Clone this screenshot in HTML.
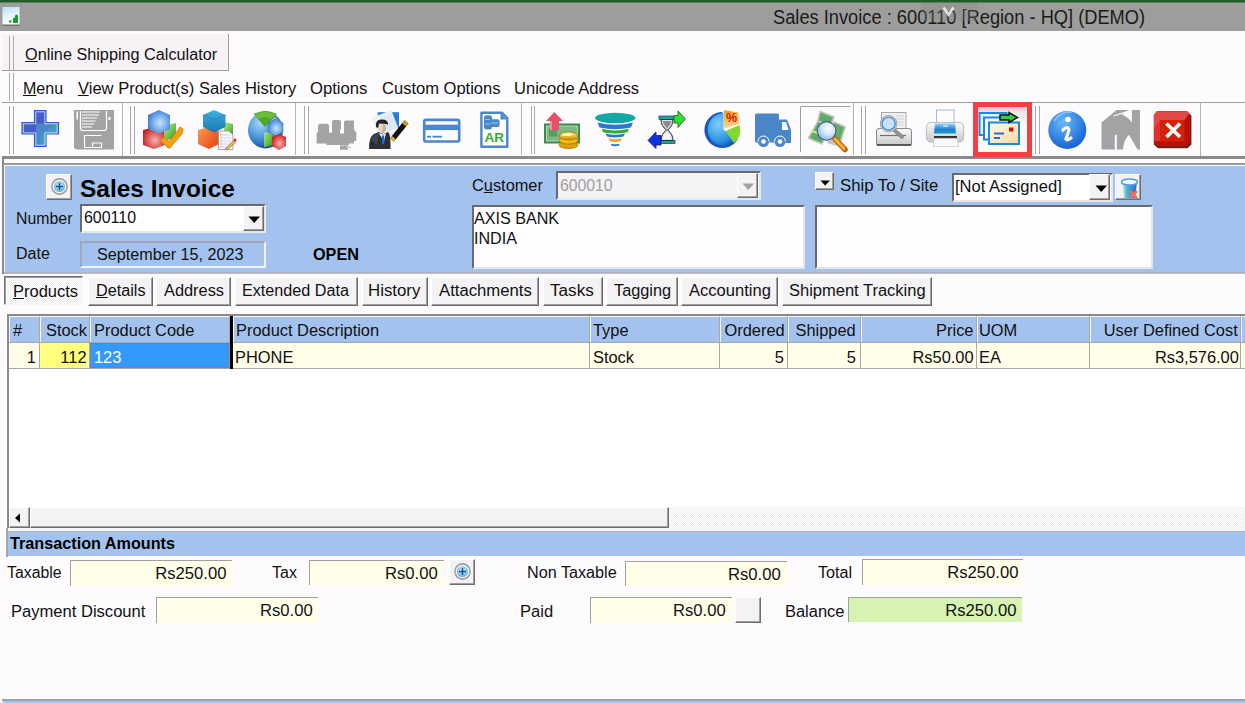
<!DOCTYPE html>
<html><head><meta charset="utf-8">
<style>
*{box-sizing:border-box;margin:0;padding:0}
html,body{width:1245px;height:703px;overflow:hidden;background:#fefbfe;font-family:"Liberation Sans",sans-serif;font-size:16px;color:#111}
.a{position:absolute}
.t{position:absolute;white-space:pre;line-height:1;font-size:16px}
u{text-decoration:underline;text-underline-offset:1px;text-decoration-thickness:1.3px}
.grip{position:absolute;width:5px;border-left:1px solid #a8a8a8;border-right:1px solid #a8a8a8}
.vsep{position:absolute;width:2px;border-left:1px solid #b0b0b0;border-right:1px solid #fff}
.btn{position:absolute;background:#f5f2f5;border:1px solid;border-color:#fff #6e6e6e #6e6e6e #fff;box-shadow:inset -1px -1px 0 #a0a0a0}
.fld{position:absolute;background:#fffee8;border-top:1px solid #a0a0a0;border-left:1px solid #a0a0a0}
.num{position:absolute;right:6px;white-space:pre;line-height:1;transform:scaleX(1.04);transform-origin:100% 0}
.tab{position:absolute;top:277px;height:29px;background:#f5f2f5;border:1px solid;border-color:#fff #6a6a6a #6a6a6a #fff;box-shadow:inset -1px -1px 0 #a0a0a0}
.tab span{position:absolute;top:5px;margin-left:-1px;white-space:pre;line-height:1}
.hd{position:absolute;top:316px;height:27px;background:#a3c3ee;border-top:1px solid #f4f8fc;border-bottom:1px solid #a0a8b4;border-right:1px solid #a8a8a8;box-shadow:inset 1px 0 0 #f4f8fc}
.hd span{position:absolute;top:6px;white-space:pre;line-height:1}
.cl span{position:absolute;top:6.5px;white-space:pre;line-height:1}
.cl{position:absolute;top:343px;height:26px;background:#fffee8;border-right:1px solid #a8a8a8;border-bottom:1px solid #a8a8a8}
</style></head><body>

<!-- title bar -->
<div class="a" style="left:0;top:0;width:1245px;height:3px;background:linear-gradient(#235c2a 0,#235c2a 2px,#5e7c60 2px)"></div>
<div class="a" style="left:0;top:3px;width:1245px;height:28px;background:#9d9e9b"></div>
<svg class="a" style="left:0;top:3px" width="24" height="26"><defs><linearGradient id="ti" x1="0" y1="0" x2="0.3" y2="1"><stop offset="0" stop-color="#b8e0f8"/><stop offset="0.6" stop-color="#e8f6fd"/><stop offset="1" stop-color="#ffffff"/></linearGradient></defs>
<rect x="2.5" y="21" width="17" height="2" fill="#505050" opacity="0.6"/>
<rect x="2.5" y="4" width="17" height="17.5" fill="url(#ti)"/>
<circle cx="10.2" cy="18.5" r="1.3" fill="#1a9a2a"/>
<path d="M13,20V16Q13,14.8 14,14.8H15.5V20Z" fill="#1a9a2a"/>
<path d="M15,20V13Q15,11.5 16.5,11.5Q18,11.5 18,13V20Z" fill="#1a9a2a"/>
</svg>
<div class="t" style="left:773px;top:7px;font-size:20px;color:#1a1a1a;transform:scaleX(0.913);transform-origin:0 0">Sales Invoice : 600110 [Region - HQ] (DEMO)</div>
<div class="a" style="left:921px;top:3px;width:56px;height:18px;background:rgba(135,135,135,0.3)"></div>
<svg class="a" style="left:941px;top:6px" width="16" height="12"><path d="M2.5,1.5L7.5,8.5L12.5,1.5" fill="none" stroke="#f4f4f4" stroke-width="2.6" opacity="0.85"/></svg>

<!-- shipping toolbar -->
<div class="a" style="left:2px;top:34px;width:227px;height:37px;background:#f6f2f6;border-right:1px solid #a0a0a0;border-bottom:1px solid #a0a0a0"></div>
<div class="grip" style="left:9px;top:36px;height:34px"></div>
<div class="t" style="left:25px;top:47px;transform:scaleX(1.014);transform-origin:0 0"><u>O</u>nline Shipping Calculator</div>

<!-- menu bar -->
<div class="a" style="left:2px;top:102px;width:1243px;height:1px;background:#a0a0a0"></div>
<div class="grip" style="left:9px;top:73px;height:28px"></div>
<div class="t" style="left:23px;top:81px"><u>M</u>enu</div>
<div class="t" style="left:77.5px;top:81px;transform:scaleX(1.033);transform-origin:0 0"><u>V</u>iew Product(s) Sales History</div>
<div class="t" style="left:310px;top:81px;transform:scaleX(1.04);transform-origin:0 0">Options</div>
<div class="t" style="left:381.5px;top:81px;transform:scaleX(1.033);transform-origin:0 0">Custom Options</div>
<div class="t" style="left:513.5px;top:81px;transform:scaleX(1.033);transform-origin:0 0">Unicode Address</div>

<!-- icon toolbar -->
<div id="tb">
<svg class="a" style="left:0;top:100px;z-index:2" width="1245" height="58" viewBox="0 100 1245 58">
<defs>
<radialGradient id="gBlue" cx="0.55" cy="0.55" r="0.6"><stop offset="0" stop-color="#c8e4fa"/><stop offset="0.6" stop-color="#70a8e8"/><stop offset="1" stop-color="#3a78d0"/></radialGradient>
<radialGradient id="gRed" cx="0.55" cy="0.6" r="0.6"><stop offset="0" stop-color="#f4b0b0"/><stop offset="0.6" stop-color="#e05858"/><stop offset="1" stop-color="#c82020"/></radialGradient>
<linearGradient id="gGreen" x1="0" y1="0" x2="1" y2="1"><stop offset="0" stop-color="#b0f080"/><stop offset="1" stop-color="#3a9a20"/></linearGradient>
<linearGradient id="gTeal" x1="0" y1="0" x2="0" y2="1"><stop offset="0" stop-color="#40b0e0"/><stop offset="1" stop-color="#1878b0"/></linearGradient>
<linearGradient id="gOrange" x1="0" y1="0" x2="1" y2="1"><stop offset="0" stop-color="#ff9a50"/><stop offset="1" stop-color="#e04010"/></linearGradient>
<radialGradient id="gSphere" cx="0.35" cy="0.3" r="0.8"><stop offset="0" stop-color="#a8d8f8"/><stop offset="0.6" stop-color="#3a8ad0"/><stop offset="1" stop-color="#0a3a90"/></radialGradient>
<radialGradient id="gInfo" cx="0.4" cy="0.3" r="0.8"><stop offset="0" stop-color="#6ab8f8"/><stop offset="1" stop-color="#0a58d0"/></radialGradient>
<radialGradient id="gPie" cx="0.35" cy="0.35" r="0.75"><stop offset="0" stop-color="#80d0f8"/><stop offset="0.7" stop-color="#2a90e0"/><stop offset="1" stop-color="#1050b0"/></radialGradient>
<linearGradient id="gX" x1="0" y1="0" x2="1" y2="1"><stop offset="0" stop-color="#e83828"/><stop offset="0.7" stop-color="#c01808"/><stop offset="1" stop-color="#601008"/></linearGradient>
<linearGradient id="gGold" x1="0" y1="0" x2="0" y2="1"><stop offset="0" stop-color="#fff080"/><stop offset="1" stop-color="#d08a00"/></linearGradient>
<linearGradient id="gMail" x1="0" y1="0" x2="1" y2="1"><stop offset="0" stop-color="#fffbe8"/><stop offset="1" stop-color="#f8d8a0"/></linearGradient>
<linearGradient id="gBox" x1="0" y1="0" x2="0" y2="1"><stop offset="0" stop-color="#b8b8b8"/><stop offset="0.15" stop-color="#e8e8e8"/><stop offset="0.4" stop-color="#fafafa"/></linearGradient>
</defs>
<!-- toolbar frame lines -->
<rect x="2" y="102" width="1243" height="1" fill="#a0a0a0"/>
<rect x="122" y="103" width="1" height="53" fill="#b4b4b4"/>
<rect x="295" y="103" width="1" height="52" fill="#b4b4b4"/>
<rect x="521" y="103" width="1" height="52" fill="#b4b4b4"/>
<rect x="853" y="103" width="1" height="52" fill="#b4b4b4"/>
<rect x="1200" y="103" width="1" height="53" fill="#b4b4b4"/>
<!-- grips -->
<g fill="#a8a8a8">
<rect x="9" y="106" width="1" height="48"/><rect x="13" y="106" width="1" height="48"/>
<rect x="130" y="106" width="1" height="48"/><rect x="134" y="106" width="1" height="48"/>
<rect x="304" y="106" width="1" height="48"/><rect x="308" y="106" width="1" height="48"/>
<rect x="531" y="106" width="1" height="48"/><rect x="534" y="106" width="1" height="48"/>
<rect x="861" y="106" width="1" height="48"/><rect x="865" y="106" width="1" height="48"/>
<rect x="1035" y="106" width="1" height="48"/><rect x="1039" y="106" width="1" height="48"/>
</g>
<!-- 1 plus -->
<path d="M34.5,110.5H46V122.5H58.5V134H46V146.5H34.5V134H22V122.5H34.5Z" fill="#4a88cc" stroke="#2a5ed8" stroke-width="1.2"/>
<path d="M35.5,111.5H45V123.5H36V133H23V123.5H35.5Z" fill="#4a5cc8"/>
<path d="M46,134H57.5V123.5H46V145.5H36V134Z" fill="#4a8ac8"/>
<path d="M44,132L57,125V133H46V145L40,145L42,135Z" fill="#48a0c8" opacity="0.7"/>
<path d="M35.8,111.8H44.8V123.8H57.2V132.8H44.8V145.2H35.8V132.8H23.3V123.8H35.8Z" fill="none" stroke="#d8ecfc" stroke-width="0.9" opacity="0.85"/>
<!-- 2 disk -->
<path d="M74,110H114V149.5H76L74,147.5Z" fill="#a3a2a5"/>
<path d="M80.5,111V128Q80.5,130.5 83,130.5H104Q106.5,130.5 106.5,128V111" fill="none" stroke="#fff" stroke-width="1.2"/>
<g fill="#fff"><rect x="82" y="111.5" width="18" height="1"/><rect x="82" y="114.5" width="17" height="1"/><rect x="82" y="117.5" width="15" height="1"/><rect x="82" y="120.5" width="13.5" height="1"/><rect x="82" y="123.5" width="12" height="1"/><rect x="82" y="126.5" width="10" height="1"/></g>
<path d="M84.5,147.5V135.5H101.5M84.5,147.5H101.5V143H92.5V147" fill="none" stroke="#fff" stroke-width="1.2"/>
<rect x="76.5" y="111.5" width="1.5" height="8" fill="#fff"/><rect x="108.5" y="117" width="2" height="3" fill="#fff"/>
<!-- 3 cubes check -->
<path d="M143,130L154,127L165,131V145L154,149L143,145Z" fill="url(#gRed)"/>
<path d="M164,126L176,123V138L164,141Z" fill="url(#gGreen)"/>
<path d="M148,115L159,110L170,115V129L159,133.5L148,129Z" fill="url(#gBlue)"/>
<path d="M160,140L165,137L169,142L180,127L183,129L182,134L170,148L168,148Z" fill="#f5a010" stroke="#d08000" stroke-width="0.8"/>
<!-- 4 cubes doc -->
<path d="M198,130L209,127L219,131V144L209,149L198,144Z" fill="url(#gOrange)"/>
<path d="M224,122L233,124V137L224,138Z" fill="url(#gGreen)"/>
<path d="M203,115L214,110L225.5,115V127L214,132.5L203,127Z" fill="url(#gTeal)"/>
<path d="M203,115L214,120L225.5,115" fill="none" stroke="#2a88c0" stroke-width="1"/>
<path d="M218.5,131H229L233,135V149.5H218.5Z" fill="#f8f8ff" stroke="#8a9a8a" stroke-width="0.8"/>
<g stroke="#b0c0e8" stroke-width="0.6"><path d="M220,135H231M220,138H231M220,141H231M220,144H231M220,147H231"/></g>
<path d="M221,131V149" stroke="#f0a0a0" stroke-width="0.6"/>
<path d="M225,149L234,140L236,142L227,150Z" fill="#e8c040" stroke="#555" stroke-width="0.5"/>
<circle cx="235" cy="140" r="1.5" fill="#e03030"/>
<!-- 5 globe cubes -->
<ellipse cx="265.5" cy="130" rx="17.5" ry="18.5" fill="url(#gSphere)"/>
<path d="M270,114Q280,118 282,128L272,126Z" fill="#8cc4ec" opacity="0.8"/>
<path d="M253.5,114Q265,108 277,114L265,127Z" fill="#50a820"/>
<path d="M254,114Q265,110 276,114L270,119Q265,115 259,119Z" fill="#80c850" opacity="0.6"/>
<path d="M264,133L273,130V145L264,147Z" fill="url(#gGreen)"/>
<path d="M268,123L275.5,119L283,123V132L275.5,136L268,132Z" fill="url(#gBlue)" stroke="#4a78c0" stroke-width="0.6"/>
<path d="M272,137L279,134L286,137V146L279,150L272,146Z" fill="url(#gRed)"/>
<!-- 6 gray people -->
<path d="M318,126Q318,124 320,123.7H327Q329,124 329,126V132.5H332V122Q332,120 334,120H339Q341,120 341,122V129.5H340V133.5H344V122Q344,120.5 346,120.5H354V130H355V131.5H356.3V141H354V143.5H349V145H326.5V143.5H316.6V132.5H318Z" fill="#a3a2a5"/>
<path d="M340,145.5H348V149.7H340Z" fill="#a3a2a5"/><rect x="346" y="147" width="5" height="1" fill="#c8c8ca"/>
<!-- 7 man pen -->
<path d="M377.7,112.2H399V135H377.7Z" fill="#2a7ad8"/>
<path d="M372,118L391,110.5L399.5,132L381,139Z" fill="#eef3fa" stroke="#f0ecd8" stroke-width="0.6"/>
<path d="M380,117L392,113L397,128L386,132Z" fill="#dce8f4"/>
<path d="M369.2,149Q368.5,137 374,134L379,132L383,134L388,132Q391,134 390.5,149Z" fill="#2a2e34"/>
<path d="M371,140Q373,135 379,133L377,145Z" fill="#4a5058" opacity="0.7"/>
<path d="M378.5,133L383,134.5L386,133L384,141Z" fill="#f4f4f4"/>
<path d="M382,135.5H384L384.5,143L383,144.5L381.5,143Z" fill="#1a6ad0"/>
<path d="M377.5,122Q377,133 382,133.5Q386.5,133 386.5,122Z" fill="#e8d4c0"/>
<path d="M383,124Q386.5,125 386,130Q384,133 382,133.5Z" fill="#c8b09a"/>
<path d="M376,127Q375,119 382,119.5Q388.5,119.5 388,125L386.5,124L379,123.5L378,128Z" fill="#1e2226"/>
<path d="M390,138.5L404.5,120L408.5,123.5L394,141.5Z" fill="#111"/>
<path d="M390,138.5L392,136L396,139.5L394,141.5Z" fill="#e0b030"/>
<path d="M402,123L404.5,120L408.5,123.5L406,126.5Z" fill="#e8c040" opacity="0.8"/>
<!-- 8 card -->
<rect x="424.2" y="119.9" width="35" height="21.6" rx="1.8" fill="none" stroke="#4a88cc" stroke-width="2.6"/>
<rect x="424" y="124.7" width="35" height="5.4" fill="#4a88cc"/>
<rect x="427" y="135.8" width="4" height="1.8" fill="#4a88cc"/><rect x="432.5" y="135.8" width="9.5" height="1.8" fill="#4a88cc"/>
<!-- 9 AR doc -->
<path d="M481.4,112.8H502L507.3,118V146.8H481.4Z" fill="#fff" stroke="#4a88cc" stroke-width="2.4" stroke-linejoin="round"/>
<path d="M500.5,113V119.5H507" fill="#4a88cc"/>
<g fill="#4a88cc"><rect x="484" y="115.2" width="8" height="14.3" rx="2.5"/><rect x="490.3" y="119.3" width="9.3" height="7.8" rx="2"/></g>
<g stroke="#d8e8f8" stroke-width="0.6"><path d="M485,119.5H490M485,124H490M491,123H498"/></g>
<text x="484.6" y="141.6" font-family="Liberation Sans" font-weight="bold" font-size="13" fill="#30b030" textLength="19.5" lengthAdjust="spacingAndGlyphs">AR</text>
<!-- 10 money arrow -->
<rect x="544" y="123.5" width="36" height="20" fill="#3a8a4a"/>
<rect x="546.5" y="126" width="31" height="15" fill="#7ab884" stroke="#c8e4c8" stroke-width="0.8"/>
<rect x="549" y="128.5" width="8" height="8" fill="#5a9a64"/>
<path d="M554.3,112L563,121H559V130H550V121H546Z" fill="#e8506a"/>
<path d="M550,121H552V130H550Z" fill="#f890a0"/>
<ellipse cx="568.5" cy="145" rx="9.5" ry="3.5" fill="#e0a000" stroke="#b07000" stroke-width="0.8"/>
<ellipse cx="568.5" cy="140.5" rx="9.5" ry="3.5" fill="#f0c010" stroke="#b07000" stroke-width="0.8"/>
<ellipse cx="568.5" cy="136" rx="9.5" ry="4" fill="url(#gGold)" stroke="#b07000" stroke-width="0.8"/>
<ellipse cx="567" cy="134.5" rx="5" ry="1.5" fill="#fff8c0"/>
<!-- 11 funnel -->
<ellipse cx="615.3" cy="118" rx="20.2" ry="5.2" fill="#10a8a0"/>
<path d="M597.5,122.5Q615,127 633,122.5L631,127.5Q615,131 599.5,127.5Z" fill="#2a78d0"/>
<path d="M601.5,128.8Q615,132 629,128.8L627.5,132.2Q615,135 603,132.2Z" fill="#30b030"/>
<path d="M605.5,133.6Q615,136 625,133.6L623.5,136.6Q615,138.5 607,136.6Z" fill="#2a78d0"/>
<path d="M608.5,138.3Q615,140 622,138.3L620.5,141.3Q615,142.8 610,141.3Z" fill="#f8a020"/>
<path d="M611,143.8Q615,144.8 619.5,143.8L619,145.8Q615,146.5 611.5,145.8Z" fill="#2a78d0"/>
<!-- 12 hourglass -->
<path d="M661,119.5H673Q673,126 667.5,130Q673,134 673,140.5H661Q661,134 666.5,130Q661,126 661,119.5Z" fill="#e0e0e0" stroke="#222" stroke-width="1"/>
<path d="M662.5,121H671.5Q670,126 667,128.5Q664,126 662.5,121Z" fill="#555" opacity="0.6"/>
<path d="M667,131.5Q670,134 671.5,139H662.5Q664,134 667,131.5Z" fill="#f4f4f4"/>
<rect x="659" y="116" width="16" height="3.5" fill="#10a8a8" stroke="#222" stroke-width="0.6"/>
<rect x="659" y="140.5" width="16" height="3" fill="#10a8a8" stroke="#222" stroke-width="0.6"/>
<path d="M674,115.5H678V111L685.5,119L678,127.5V123H674Z" fill="#30e030" stroke="#1a5a1a" stroke-width="0.8"/>
<path d="M661,135.5H656V132L648,140.5L656,148.5V145H661Z" fill="#0a30e0" stroke="#0a1a6a" stroke-width="0.8"/>
<!-- 13 pie -->
<defs><linearGradient id="gOr2" x1="0" y1="0" x2="0" y2="1"><stop offset="0" stop-color="#f0a020"/><stop offset="1" stop-color="#f8d890"/></linearGradient></defs>
<path d="M722.5,130L722.5,112A18,18 0 1 0 738,139Z" fill="#1a58c0"/>
<path d="M723.5,130L723.5,113A16.5,16.5 0 1 0 738,138.5Z" fill="url(#gPie)"/>
<path d="M724,128.5L724,110L738,112.5L739,124Z" fill="url(#gOr2)"/>
<path d="M725.5,131L739.5,125A16,16 0 0 1 734,143Z" fill="#80d830"/>
<text x="726" y="121.5" font-family="Liberation Sans" font-weight="bold" font-size="12.5" fill="#e01818">%</text>
<!-- 14 truck -->
<g fill="#4a86c8">
<rect x="755" y="113.5" width="24" height="29" rx="1.5"/>
<path d="M779,119.5H787L791,130V143H779Z"/>
<circle cx="763.5" cy="141.5" r="5.5"/><circle cx="780" cy="141.5" r="5.5"/>
</g>
<path d="M782,122H786L788.5,130H782Z" fill="#fff"/>
<circle cx="763.5" cy="141.5" r="2.3" fill="#fff"/><circle cx="780" cy="141.5" r="2.3" fill="#fff"/>
<path d="M758,141.5A5.5,5.5 0 0 1 769,141.5" fill="none" stroke="#fff" stroke-width="1"/>
<path d="M774.5,141.5A5.5,5.5 0 0 1 785.5,141.5" fill="none" stroke="#fff" stroke-width="1"/>
<!-- 15 sunken box + map -->
<path d="M800.5,152.5V106.5H850.5" fill="none" stroke="#a0a0a0" stroke-width="1"/>
<path d="M850.5,106.5V152.5H800.5" fill="none" stroke="#fff" stroke-width="1"/>
<path d="M820,111.5L834,117L830,126L818,121Z" fill="#5aae6a" stroke="#c4c4bc" stroke-width="1.6"/>
<path d="M818,121L830,126L822,144L808.5,138Z" fill="#5aae6a" stroke="#c4c4bc" stroke-width="1.6"/>
<path d="M834,122L845,127L840,143L829,137Z" fill="#5aae6a" stroke="#c4c4bc" stroke-width="1.6"/>
<path d="M829,137L840,143L836,146L827,143Z" fill="#c8c8c0"/>
<path d="M811,131L818,133" stroke="#e0e090" stroke-width="2"/>
<defs><radialGradient id="gLens" cx="0.6" cy="0.35" r="0.7"><stop offset="0" stop-color="#ffffff"/><stop offset="0.5" stop-color="#cfe6f8"/><stop offset="1" stop-color="#8ab8e0"/></radialGradient>
<linearGradient id="gHandle" x1="0" y1="0" x2="1" y2="0"><stop offset="0" stop-color="#f8d070"/><stop offset="1" stop-color="#d07000"/></linearGradient></defs>
<path d="M835,139L845,149.5" stroke="#c06a00" stroke-width="5.5" stroke-linecap="round"/>
<path d="M835,139L844,148.5" stroke="#f8b040" stroke-width="3" stroke-linecap="round"/>
<circle cx="826.6" cy="130.9" r="9.3" fill="url(#gLens)" stroke="#4a5a8a" stroke-width="1.1"/>
<!-- 16 preview -->
<defs><linearGradient id="gPB" x1="0" y1="0" x2="0" y2="1"><stop offset="0" stop-color="#fafafa"/><stop offset="1" stop-color="#c8c8c8"/></linearGradient>
<linearGradient id="gPBlue" x1="0" y1="0" x2="0" y2="1"><stop offset="0" stop-color="#a0d0f8"/><stop offset="0.6" stop-color="#1a80d0"/><stop offset="1" stop-color="#10a0c0"/></linearGradient></defs>
<rect x="881.5" y="112.5" width="24.5" height="18" fill="#f0f0f0" stroke="#a8a8a8" stroke-width="1"/>
<g stroke="#c8c8c8" stroke-width="0.8"><path d="M896,116H904M896,119H904M897,122H904M898,125H904"/></g>
<path d="M876.5,131Q876.5,128.5 879,128.5H909Q911.5,128.5 911.5,131V144Q911.5,145.5 910,145.5H878Q876.5,145.5 876.5,144Z" fill="url(#gPB)" stroke="#8a8a8a" stroke-width="1"/>
<rect x="877" y="144" width="34" height="1.8" fill="#555"/>
<path d="M880,135.5H906" stroke="#707070" stroke-width="1.2"/>
<path d="M893,129L902,137" stroke="#909090" stroke-width="4" stroke-linecap="round"/>
<circle cx="888.6" cy="123.7" r="8.3" fill="#e8e8e8" stroke="#a0a0a0" stroke-width="1"/>
<circle cx="888.6" cy="123.7" r="6.6" fill="#c8e0f8" stroke="#4a88d0" stroke-width="1.4"/>
<!-- 17 printer -->
<rect x="936.5" y="110" width="17.5" height="15" fill="#fcfcfc" stroke="#90a8d8" stroke-width="0.8"/>
<path d="M931,122.5H959Q963.7,122.5 963.7,128V137Q963.7,142 959,142H931Q926.4,142 926.4,137V128Q926.4,122.5 931,122.5Z" fill="url(#gPB)" stroke="#a8b0b8" stroke-width="0.8"/>
<path d="M935,123.5H955L956,133.5H934Z" fill="url(#gPBlue)"/>
<rect x="943" y="125.5" width="5" height="1" fill="#fff"/>
<rect x="934" y="136" width="23" height="2.4" fill="#303030"/>
<path d="M934,138.4H957.5L958.5,146.5H933.5Z" fill="#fafafa" stroke="#c0c8c0" stroke-width="0.7"/>
<!-- 18 red box selected -->
<rect x="975.5" y="104.5" width="54" height="50" fill="url(#gBox)" stroke="#f04040" stroke-width="5"/>
<rect x="979.5" y="113" width="27" height="22" fill="#eaf4ff" stroke="#1a8ae0" stroke-width="2"/>
<rect x="984" y="117.5" width="28" height="22" fill="#f4f8ff" stroke="#1a8ae0" stroke-width="2"/>
<rect x="989" y="122.5" width="30" height="21.5" fill="url(#gMail)" stroke="#1a8ae0" stroke-width="2"/>
<rect x="1009" y="127.5" width="4.5" height="4" fill="#d01010"/>
<rect x="994" y="132.5" width="10" height="2" fill="#2a70d0"/><rect x="994" y="137" width="6" height="2" fill="#2a70d0"/>
<path d="M1000,115H1009V112.5L1017.5,117.5L1009,122.5V120H1000Z" fill="#30d040" stroke="#111" stroke-width="1.5"/>
<!-- 19 info -->
<circle cx="1067.3" cy="130" r="19" fill="url(#gInfo)"/>
<path d="M1054,121Q1060,111 1072,112" fill="none" stroke="#b0d8ff" stroke-width="2" opacity="0.6"/>
<circle cx="1068" cy="119.5" r="2.8" fill="#fff"/>
<path d="M1063,130Q1068,125 1069,130L1066,139Q1067,141 1071,138" fill="none" stroke="#fff" stroke-width="3.2" stroke-linecap="round"/>
<!-- 20 home gray -->
<path d="M1101.5,122.4L1116.5,110H1129.8L1122,114.5Q1128,117 1131.9,122.5V110H1140V149.4H1137.5L1129,134.7Q1124,139 1123,149.4H1116.8V134.7H1114.8V149.4H1101.5Z" fill="#a3a2a5"/>
<path d="M1113.5,116L1129.5,110.8" stroke="#fefbfe" stroke-width="1.3"/>
<!-- 21 red X -->
<path d="M1157,111.2H1187L1191.4,115.5V144.5L1187.5,148.3H1158L1153.9,144.5V115Z" fill="#6a2010"/>
<path d="M1157,111.2H1187L1190,114.5V142L1186,146H1157.5L1153.9,142.5V115Z" fill="#b81008"/>
<path d="M1157,111.2H1187L1189,113.5L1184,121H1160L1153.9,129V115Z" fill="#e24848"/>
<path d="M1153.9,129L1160,121V141L1153.9,141Z" fill="#e03030"/>
<rect x="1160" y="120" width="24.5" height="21.5" fill="#d42008"/>
<path d="M1166.5,123.5L1180,137M1180,123.5L1166.5,137" stroke="#fff" stroke-width="3.6" stroke-linecap="butt"/>
</svg>
</div>

<!-- main frame -->
<div class="a" style="left:2px;top:156px;width:1243px;height:3px;background:#8a8a8a"></div>
<div class="a" style="left:2px;top:156px;width:2px;height:118px;background:#8a8a8a"></div>
<div class="a" style="left:4px;top:163px;width:1241px;height:2px;background:#9c9c9c"></div>

<!-- header panel -->
<div class="a" style="left:4px;top:166px;width:1px;height:106px;background:#f4f8fc"></div>
<div class="a" style="left:5px;top:166px;width:1240px;height:106px;background:#a3c3ee"></div>
<div class="a" style="left:4px;top:272px;width:1241px;height:2px;background:linear-gradient(#a8acbc,#c4c4c8)"></div>
<div class="btn" style="left:46px;top:174px;width:26px;height:26px"><svg class="a" style="left:2px;top:2px" width="20" height="20"><defs><radialGradient id="pg" cx="0.5" cy="0.4" r="0.6"><stop offset="0" stop-color="#d8f0fc"/><stop offset="1" stop-color="#58b0e8"/></radialGradient></defs><circle cx="10.5" cy="9.5" r="7.6" fill="#fafafa" stroke="#a0a0a0" stroke-width="1.6"/><circle cx="10.5" cy="9.5" r="5.6" fill="url(#pg)"/><path d="M10.5,6V13M7,9.5H14" stroke="#1e5080" stroke-width="1.5"/></svg></div>
<div id="fit17" class="t" style="transform:scaleX(0.9935);transform-origin:0 0;left:79.51px;top:177px;font-size:24.6px;font-weight:bold;color:#000">Sales Invoice</div>
<div id="fit0" class="t" style="transform:scaleX(0.9913);transform-origin:0 0;left:15.51px;top:211px">Number</div>
<div class="a" style="left:80px;top:204px;width:186px;height:29px;background:#fff;border:2px solid;border-color:#6a6a6a #e8e8e8 #e8e8e8 #6a6a6a"></div>
<div id="fit1" class="t" style="transform:scaleX(0.9965);transform-origin:0 0;left:83.72px;top:210px">600110</div>
<div class="btn" style="left:243px;top:206px;width:21px;height:25px"><svg class="a" style="left:3px;top:9px" width="14" height="8"><path d="M1.5,0.5H13L7.2,7Z" fill="#000"/></svg></div>
<div id="fit2" class="t" style="transform:scaleX(1.0000);transform-origin:0 0;left:16.00px;top:246px">Date</div>
<div class="a" style="left:80px;top:241px;width:186px;height:27px;border:2px solid;border-color:#a0a8b8 #f0f4fa #f0f4fa #a0a8b8"></div>
<div id="fit3" class="t" style="transform:scaleX(1.0105);transform-origin:0 0;left:97.49px;top:247px">September 15, 2023</div>
<div id="fit18" class="t" style="transform:scaleX(0.9889);transform-origin:0 0;left:313.02px;top:246px;font-size:16.4px;font-weight:bold;color:#000">OPEN</div>

<div id="fit4" class="t" style="transform:scaleX(1.0222);transform-origin:0 0;left:471.98px;top:177.5px">C<u>u</u>stomer</div>
<div class="a" style="left:556px;top:171px;width:205px;height:29px;background:#f5f2f5;border:2px solid;border-color:#6a6a6a #e8e8e8 #e8e8e8 #6a6a6a"></div>
<div id="fit5" class="t" style="transform:scaleX(0.9855);transform-origin:0 0;left:559.69px;top:178px;color:#a0a0a0">600010</div>
<div class="btn" style="left:737px;top:173px;width:21px;height:25px"><svg class="a" style="left:3px;top:9px" width="14" height="8"><path d="M1.5,0.5H13L7.2,7Z" fill="#a0a0a0"/></svg></div>
<div class="a" style="left:472px;top:205px;width:333px;height:64px;background:#fffcff;border:2px solid;border-color:#6a6a6a #e4e4e4 #e4e4e4 #6a6a6a"></div>
<div id="fit6" class="t" style="transform:scaleX(1.0074);transform-origin:0 0;left:473.86px;top:208.5px;line-height:20px">AXIS BANK
INDIA</div>

<div class="btn" style="left:815px;top:172px;width:19px;height:18px"><svg class="a" style="left:4px;top:7px" width="11" height="6"><path d="M0.5,0.5H10L5.2,5.5Z" fill="#000"/></svg></div>
<div id="fit7" class="t" style="transform:scaleX(1.0210);transform-origin:0 0;left:840.48px;top:176.5px;font-size:16.4px">Ship To / Site</div>
<div class="a" style="left:952px;top:173px;width:161px;height:29px;background:#fff;border:2px solid;border-color:#6a6a6a #e8e8e8 #e8e8e8 #6a6a6a"></div>
<div id="fit8" class="t" style="transform:scaleX(1.0350);transform-origin:0 0;left:955.44px;top:179px">[Not Assigned]</div>
<div class="btn" style="left:1089px;top:174px;width:21px;height:26px"><svg class="a" style="left:4px;top:10px" width="14" height="8"><path d="M1.5,0.5H13L7.2,7Z" fill="#000"/></svg></div>
<div class="btn" style="left:1115px;top:173.5px;width:26px;height:26px"><svg class="a" style="left:4px;top:3px" width="20" height="21"><defs><linearGradient id="tc" x1="0" x2="1"><stop offset="0" stop-color="#e8f4fc"/><stop offset="0.3" stop-color="#50b8d0"/><stop offset="1" stop-color="#2a68c8"/></linearGradient></defs><path d="M2,4L4,20H15L17,4Z" fill="url(#tc)"/><ellipse cx="9.5" cy="4" rx="8" ry="3" fill="#f4faff" stroke="#5a9ae0" stroke-width="1.5"/><path d="M10,13L17,20M17,13L10,20" stroke="#f07060" stroke-width="2.5"/></svg></div>
<div class="a" style="left:815px;top:205px;width:338px;height:64px;background:#fffcff;border:2px solid;border-color:#6a6a6a #e4e4e4 #e4e4e4 #6a6a6a"></div>

<!-- tabs -->
<div class="tab" style="left:4px;top:276px;width:79px;height:29px;background-color:#fff;background-image:linear-gradient(45deg,#efedef 25%,transparent 25%,transparent 75%,#efedef 75%),linear-gradient(45deg,#efedef 25%,transparent 25%,transparent 75%,#efedef 75%);background-size:2px 2px;background-position:0 0,1px 1px;border-color:#707070 #f4f4f4 #f4f4f4 #707070;box-shadow:inset 1px 1px 0 #a0a0a0"><span style="left:8.5px;top:7px;transform:scaleX(1.03);transform-origin:0 0"><u>P</u>roducts</span></div>
<div class="tab" style="left:88px;width:65px"><span style="left:7.60px;transform:scaleX(1.0125);transform-origin:0 0"><u>D</u>etails</span></div>
<div class="tab" style="left:156px;width:75px"><span style="left:7.90px;transform:scaleX(1.0224);transform-origin:0 0">Address</span></div>
<div class="tab" style="left:235px;width:123px"><span style="left:7.40px;transform:scaleX(1.0105);transform-origin:0 0">Extended Data</span></div>
<div class="tab" style="left:362px;width:66px"><span style="left:6.10px;transform:scaleX(1.0521);transform-origin:0 0">History</span></div>
<div class="tab" style="left:431px;width:108px"><span style="left:7.90px;transform:scaleX(1.0432);transform-origin:0 0">Attachments</span></div>
<div class="tab" style="left:543px;width:60px"><span style="left:7.40px;transform:scaleX(1.0700);transform-origin:0 0">Tasks</span></div>
<div class="tab" style="left:606px;width:72px"><span style="left:8.00px;transform:scaleX(1.0182);transform-origin:0 0">Tagging</span></div>
<div class="tab" style="left:681px;width:97px"><span style="left:8.00px;transform:scaleX(1.0346);transform-origin:0 0">Accounting</span></div>
<div class="tab" style="left:782px;width:150px"><span style="left:6.50px;transform:scaleX(1.0308);transform-origin:0 0">Shipment Tracking</span></div>

<!-- grid -->
<div class="a" style="left:7px;top:314px;width:1238px;height:214px;background:#fff;border-left:2px solid #8a8a8a;border-top:2px solid #8a8a8a"></div>
<div id="grid">
<div class="hd" style="left:9px;width:31px"><span id="h0" style="left:4.0px;transform:scaleX(1.025);transform-origin:0 0">#</span></div>
<div class="hd" style="left:40px;width:50px"><span id="h1" style="right:2.4px;transform:scaleX(1.025);transform-origin:100% 0">Stock</span></div>
<div class="hd" style="left:90px;width:140px"><span id="h2" style="left:4.0px;transform:scaleX(1.025);transform-origin:0 0">Product Code</span></div>
<div class="hd" style="left:233px;width:357px"><span id="h3" style="left:3.4px;transform:scaleX(1.025);transform-origin:0 0">Product Description</span></div>
<div class="hd" style="left:590px;width:130px"><span id="h4" style="left:3.4px;transform:scaleX(1.025);transform-origin:0 0">Type</span></div>
<div class="hd" style="left:720px;width:68px"><span id="h5" style="right:2.8px;transform:scaleX(1.025);transform-origin:100% 0">Ordered</span></div>
<div class="hd" style="left:788px;width:73px"><span id="h6" style="right:3.8px;transform:scaleX(1.025);transform-origin:100% 0">Shipped</span></div>
<div class="hd" style="left:861px;width:116px"><span id="h7" style="right:2.2px;transform:scaleX(1.025);transform-origin:100% 0">Price</span></div>
<div class="hd" style="left:977px;width:113px"><span id="h8" style="left:2.2px;transform:scaleX(1.025);transform-origin:0 0">UOM</span></div>
<div class="hd" style="left:1090px;width:151px"><span id="h9" style="right:2.6px;transform:scaleX(1.025);transform-origin:100% 0">User Defined Cost</span></div>
<div class="hd" style="left:1241px;width:20px"><span id="h10" style="left:-1241.0px;transform:scaleX(1.025);transform-origin:0 0"></span></div>
<div class="cl" style="left:9px;width:31px;"><span id="d0" style="right:3.6px;transform:scaleX(1.025);transform-origin:100% 0">1</span></div>
<div class="cl" style="left:40px;width:50px;background:#ffff80;"><span id="d1" style="right:2.4px;transform:scaleX(1.025);transform-origin:100% 0">112</span></div>
<div class="cl" style="left:90px;width:140px;background:#3399ff;color:#fff;"><span id="d2" style="left:4.0px;transform:scaleX(1.025);transform-origin:0 0">123</span></div>
<div class="cl" style="left:233px;width:357px;"><span id="d3" style="left:1.8px;transform:scaleX(1.025);transform-origin:0 0">PHONE</span></div>
<div class="cl" style="left:590px;width:130px;"><span id="d4" style="left:3.4px;transform:scaleX(1.025);transform-origin:0 0">Stock</span></div>
<div class="cl" style="left:720px;width:68px;"><span id="d5" style="right:2.8px;transform:scaleX(1.025);transform-origin:100% 0">5</span></div>
<div class="cl" style="left:788px;width:73px;"><span id="d6" style="right:3.8px;transform:scaleX(1.025);transform-origin:100% 0">5</span></div>
<div class="cl" style="left:861px;width:116px;"><span id="d7" style="right:2.2px;transform:scaleX(1.025);transform-origin:100% 0">Rs50.00</span></div>
<div class="cl" style="left:977px;width:113px;"><span id="d8" style="left:2.2px;transform:scaleX(1.025);transform-origin:0 0">EA</span></div>
<div class="cl" style="left:1090px;width:151px;"><span id="d9" style="right:1.6px;transform:scaleX(1.025);transform-origin:100% 0">Rs3,576.00</span></div>
<div class="cl" style="left:1241px;width:20px;"><span id="d10" style="left:-1241.0px;transform:scaleX(1.025);transform-origin:0 0"></span></div>
<div class="a" style="left:230px;top:316px;width:3px;height:53px;background:#000"></div>
<div class="a" style="left:90px;top:343px;width:140px;height:25px;border:1px dotted #b07030"></div>
</div>

<!-- scrollbar -->
<div class="a" style="left:9px;top:507px;width:1236px;height:21px;background-color:#fff;background-image:linear-gradient(45deg,#efedef 25%,transparent 25%,transparent 75%,#efedef 75%),linear-gradient(45deg,#efedef 25%,transparent 25%,transparent 75%,#efedef 75%);background-size:2px 2px;background-position:0 0,1px 1px"></div>
<div class="btn" style="left:9px;top:507px;width:21px;height:21px"><svg class="a" style="left:4px;top:5px" width="8" height="11"><path d="M6,0.5V9.5L1,5Z" fill="#000"/></svg></div>
<div class="btn" style="left:30px;top:507px;width:639px;height:21px"></div>

<!-- transaction amounts -->
<div class="a" style="left:6px;top:528px;width:1239px;height:3px;background:#f6f6f6"></div>
<div class="a" style="left:6px;top:531px;width:1239px;height:1px;background:#b4b4b4"></div>
<div class="a" style="left:6px;top:528px;width:2px;height:29px;background:#a8a8a8"></div>
<div class="a" style="left:8px;top:532px;width:1237px;height:24px;background:#a3c3ee"></div>
<div id="fit16" class="t" style="transform:scaleX(1.0125);transform-origin:0 0;left:10.00px;top:536px;font-weight:bold;color:#000">Transaction Amounts</div>

<div id="fit9" class="t" style="transform:scaleX(0.99);transform-origin:0 0;left:7.0px;top:565px">Taxable</div>
<div class="fld" style="left:70px;top:560px;width:162px;height:26px"><span class="num" style="top:5px">Rs250.00</span></div>
<div id="fit10" class="t" style="transform:scaleX(1.0);transform-origin:0 0;left:272.0px;top:565px">Tax</div>
<div class="fld" style="left:309px;top:560px;width:135px;height:25px"><span class="num" style="top:4.5px">Rs0.00</span></div>
<div class="btn" style="left:449px;top:559px;width:26px;height:26px"><svg class="a" style="left:2px;top:2px" width="20" height="20"><defs><radialGradient id="pg" cx="0.5" cy="0.4" r="0.6"><stop offset="0" stop-color="#d8f0fc"/><stop offset="1" stop-color="#58b0e8"/></radialGradient></defs><circle cx="10.5" cy="9.5" r="7.6" fill="#fafafa" stroke="#a0a0a0" stroke-width="1.6"/><circle cx="10.5" cy="9.5" r="5.6" fill="url(#pg)"/><path d="M10.5,6V13M7,9.5H14" stroke="#1e5080" stroke-width="1.5"/></svg></div>
<div id="fit11" class="t" style="transform:scaleX(1.0115);transform-origin:0 0;left:527.01px;top:565px">Non Taxable</div>
<div class="fld" style="left:625px;top:561px;width:162px;height:25px"><span class="num" style="top:5px">Rs0.00</span></div>
<div id="fit12" class="t" style="transform:scaleX(1.01);transform-origin:0 0;left:818.3px;top:565px">Total</div>
<div class="fld" style="left:862px;top:559px;width:161px;height:26px"><span class="num" style="top:5px;right:5px">Rs250.00</span></div>

<div id="fit13" class="t" style="transform:scaleX(1.0350);transform-origin:0 0;left:11.47px;top:604px">Payment Discount</div>
<div class="fld" style="left:156px;top:597px;width:162px;height:26px"><span class="num" style="top:5px;right:5px">Rs0.00</span></div>
<div id="fit14" class="t" style="transform:scaleX(1.0338);transform-origin:0 0;left:519.95px;top:604px">Paid</div>
<div class="fld" style="left:590px;top:597px;width:142px;height:26px"><span class="num" style="top:4.5px;right:6px">Rs0.00</span></div>
<div class="btn" style="left:735px;top:597px;width:26px;height:26px"></div>
<div id="fit15" class="t" style="transform:scaleX(1.0269);transform-origin:0 0;left:784.99px;top:604px">Balance</div>
<div class="fld" style="left:848px;top:597px;width:174px;height:25px;background:#d6f3b2"><span class="num" style="top:5px">Rs250.00</span></div>

<!-- bottom -->
<div class="a" style="left:2px;top:699px;width:1243px;height:2px;background:#a0a0a0"></div>
<div class="a" style="left:3px;top:701px;width:1242px;height:2px;background:#a3c3ee"></div>

</body></html>
